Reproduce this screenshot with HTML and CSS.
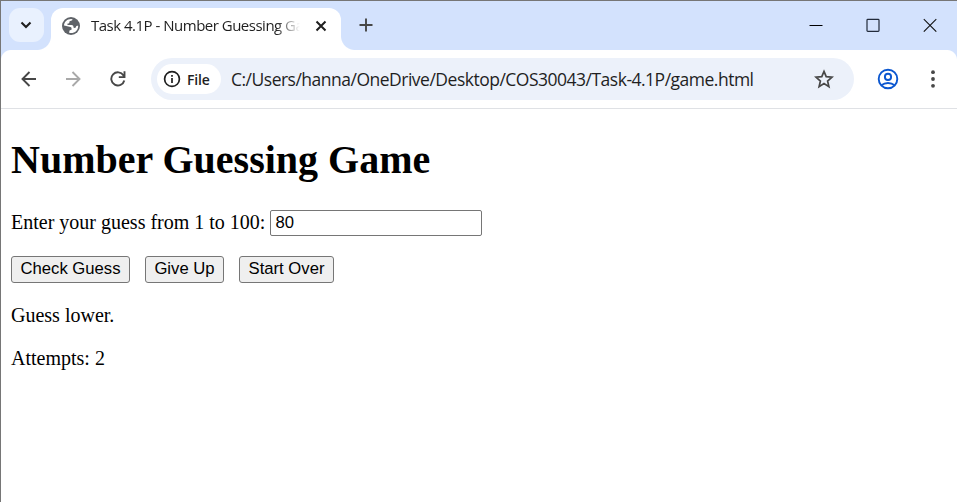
FILE: index.html
```html
<!DOCTYPE html>
<html lang="en">
<head>
<meta charset="utf-8">
<title>Number Guessing Game</title>
<link rel="stylesheet" href="styles.css">
</head>
<body>
<div class="window">
  <header class="tabstrip">
    <button class="tab-search" aria-label="Search tabs">
      <svg width="12" height="8" viewBox="0 0 12 8"><path d="M1.500 1.500 6 6l4.500-4.500" fill="none" stroke="#1f1f1f" stroke-width="2.100"/></svg>
    </button>
    <div class="tab">
      <svg class="globe" width="18" height="18" viewBox="0 0 18 18"><circle cx="9" cy="9" r="9" fill="#5f6368"/><path d="M10.500 2.200C10.500 3 10 3.600 9 3.700 7.800 3.800 7.300 4.300 7.400 5.300c0 .9-.5 1.200-1.600 1.300-.5.100-.6 1.400 0 1.400h3.700c1.300 0 2 .8 2 2.200 0 .5.300.8.900.8 1.300 0 1.700-.5 1.700-1.400 0-.5.500-.9 2.100-.9C16.200 13 13.200 16.100 9 16.100c-.7 0-1.200-.1-1.700-.2v-1.500c0-.8.500-1.300 1.300-1.400.8 0 1-.6 1-1.300 0-1.200-.8-1.900-2.200-1.900L2 8.500C2.200 4.900 5.200 2 9 2z" fill="#fff"/></svg>
      <span class="tab-title">Task 4.1P - Number Guessing Ga</span>
      <svg class="tab-close" width="12" height="12" viewBox="0 0 12 12"><path d="m1.500 1.500 9 9m0-9-9 9" stroke="#1f1f1f" stroke-width="2"/></svg>
    </div>
    <svg class="new-tab" width="14" height="14" viewBox="0 0 14 14"><path d="M7 .5v13M.5 7h13" stroke="#474747" stroke-width="1.900"/></svg>
    <div class="window-controls">
      <svg width="14" height="14" viewBox="0 0 14 14"><path d="M.5 7.500h13" stroke="#000"/></svg>
      <svg width="14" height="14" viewBox="0 0 14 14"><rect x="1" y="1.400" width="12" height="12" rx=".8" fill="none" stroke="#222b3b" stroke-width="1.200"/></svg>
      <svg width="14" height="14" viewBox="0 0 14 14"><path d="m.8 1.200 12.500 12.500m0-12.500L.8 13.700" stroke="#111" stroke-width="1.050"/></svg>
    </div>
  </header>
  <nav class="toolbar">
    <svg class="nav-icon back" width="16" height="16" viewBox="0 0 16 16"><path d="M15 8H2m6.500-7-7 7 7 7" fill="none" stroke="#474747" stroke-width="1.900"/></svg>
    <svg class="nav-icon forward" width="16" height="16" viewBox="0 0 16 16"><path d="M1 8h13M7.500 1l7 7-7 7" fill="none" stroke="#a9a9a9" stroke-width="1.900"/></svg>
    <svg class="nav-icon reload" width="16" height="16" viewBox="0 0 16 16"><path d="M14.300 9.500A6.600 6.600 0 1 1 13.500 4.400L14.500 5.500M14.500.3v5.800H8.800" fill="none" stroke="#474747" stroke-width="1.900"/></svg>
    <div class="omnibox">
      <div class="chip">
        <svg width="18" height="18" viewBox="0 0 18 18"><circle cx="9" cy="9" r="7.400" fill="none" stroke="#1f1f1f" stroke-width="1.700"/><path d="M9 8v5M9 5v1.800" stroke="#1f1f1f" stroke-width="1.700"/></svg>
        <span>File</span>
      </div>
      <span class="url">C:/Users/hanna/OneDrive/Desktop/COS30043/Task-4.1P/game.html</span>
      <svg class="star" width="20" height="20" viewBox="0 0 20 20"><path d="m10 2.400 2.200 5.300 5.800.5-4.400 3.800 1.300 5.600-4.900-3-4.900 3 1.300-5.600L2 8.200l5.800-.5z" fill="none" stroke="#474747" stroke-width="1.700"/></svg>
    </div>
    <svg class="profile" width="22" height="22" viewBox="0 0 22 22"><g fill="none" stroke="#0b57d0" stroke-width="1.900"><circle cx="11" cy="11" r="9.300"/><circle cx="11" cy="8.900" r="3.100"/><path d="M4.500 17.300c1.700-1.500 4-2.300 6.500-2.300s4.800.8 6.500 2.300"/></g></svg>
    <svg class="menu" width="4" height="18" viewBox="0 0 4 18"><g fill="#474747"><circle cx="2" cy="2.200" r="1.900"/><circle cx="2" cy="9" r="1.900"/><circle cx="2" cy="15.800" r="1.900"/></g></svg>
  </nav>
  <main class="page">
    <h1>Number Guessing Game</h1>
    <p class="guess-row"><label for="guess">Enter your guess from 1 to 100:</label><input id="guess" type="text" value="80"></p>
    <div class="actions">
      <button class="check">Check Guess</button>
      <button class="give-up">Give Up</button>
      <button class="restart">Start Over</button>
    </div>
    <p class="hint">Guess lower.</p>
    <p class="attempts">Attempts: 2</p>
  </main>
</div>
</body>
</html>
```
FILE: styles.css
```css
* { box-sizing: border-box; }
body { margin: 0; overflow: hidden; }
svg { display: block; flex: none; }
.window {
  height: 502px;
  border-left: 1px solid #767676;
  border-top: 1px solid #767676;
  background: #fff;
}
.tabstrip {
  display: flex;
  height: 49px;
  background: #d3e2fd;
  font-family: "Open Sans", sans-serif;
}
.tab-search {
  display: flex;
  align-items: center;
  justify-content: center;
  width: 35px;
  height: 34px;
  margin: 7px 7px 0 8px;
  padding: 0 1px 0 0;
  border: 0;
  border-radius: 11px;
  background: #e9f1fe;
}
.tab {
  position: relative;
  display: flex;
  align-items: center;
  width: 290px;
  height: 42px;
  margin-top: 7px;
  padding: 0 0 7px 11px;
  border-radius: 12px 12px 0 0;
  background: #fff;
}
.tab::before, .tab::after {
  content: "";
  position: absolute;
  bottom: 0;
  width: 14px;
  height: 14px;
}
.tab::before { left: -14px; background: radial-gradient(circle at 0 0, transparent 13.500px, #fff 14.500px); }
.tab::after { right: -14px; background: radial-gradient(circle at 100% 0, transparent 13.500px, #fff 14.500px); }
.tab-title {
  width: 210px;
  margin-left: 11px;
  white-space: nowrap;
  font-size: 15px;
  letter-spacing: -0.500px;
  line-height: 20px;
  margin-top: -1px;
  color: #1f1f1f;
  -webkit-mask-image: linear-gradient(to right, #000 185px, transparent 209px);
  mask-image: linear-gradient(to right, #000 185px, transparent 209px);
}
.tab-close { margin-left: 14px; }
.new-tab { margin: 17px 0 0 18px; }
.window-controls {
  display: flex;
  gap: 43px;
  margin: 17px 20px 0 auto;
}
.toolbar {
  display: flex;
  align-items: center;
  height: 59px;
  border-bottom: 1px solid #dfe1e5;
  background: radial-gradient(circle at 10px 10px, #fff 9.500px, #d3e2fd 10.500px) 0 0 / 10px 10px no-repeat,
    radial-gradient(circle at 0 10px, #fff 9.500px, #d3e2fd 10.500px) 100% 0 / 10px 10px no-repeat, #fff;
  font-family: "Open Sans", sans-serif;
  color: #1f1f1f;
}
.back { margin-left: 20px; }
.forward { margin-left: 28px; }
.reload { margin-left: 29px; }
.omnibox {
  display: flex;
  align-items: center;
  width: 703px;
  height: 42px;
  margin-left: 25px;
  padding-left: 6px;
  border-radius: 21px;
  background: #ecf1fa;
}
.chip {
  display: flex;
  align-items: center;
  gap: 6px;
  width: 64px;
  height: 30px;
  padding-left: 6px;
  border-radius: 15px;
  background: #fff;
  font-size: 14px;
  font-weight: 600;
  letter-spacing: -0.200px;
}
.url {
  width: 574px;
  margin-left: 10px;
  font-size: 17.500px;
  letter-spacing: -0.500px;
  white-space: nowrap;
}
.star { margin-left: 9px; }
.profile { margin-left: 23px; }
.menu { margin-left: 32px; }
.page {
  padding: 0 10px;
  font-family: "Liberation Serif", serif;
  font-size: 20px;
  color: #000;
}
h1 { margin: 28px 0 26px; font-size: 40px; line-height: 46px; }
p { margin: 0; line-height: 23px; }
.guess-row { display: flex; align-items: center; gap: 5px; height: 27px; }
.guess-row input {
  width: 212px;
  height: 26px;
  padding: 1px 4px 1px;
  border: 1px solid #767676;
  border-radius: 2px;
  font: 16.670px "Liberation Sans", sans-serif;
}
.actions { display: flex; gap: 15px; margin: 20px 0 21px; }
.actions button {
  height: 27px;
  padding: 0 0 2px;
  border: 1px solid #767676;
  border-radius: 3px;
  background: #efefef;
  color: #000;
  font: 16.670px "Liberation Sans", sans-serif;
  white-space: nowrap;
}
.actions .check { width: 119px; }
.actions .give-up { width: 79px; }
.actions .restart { width: 95px; }
.attempts { margin-top: 20px; }
```
